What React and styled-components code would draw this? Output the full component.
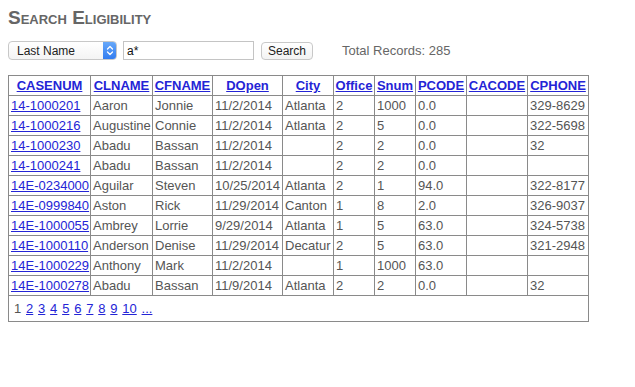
import React from "react";
import styled, { createGlobalStyle } from "styled-components";

const Global = createGlobalStyle`
  html, body { margin: 0; padding: 0; background: #fff; }
  body { font-family: "Liberation Sans", Arial, sans-serif; color: #555; }
`;

const Page = styled.div`
  padding: 7px 8px 8px 8px;
`;

const Title = styled.h1`
  margin: 0;
  font-family: "Liberation Sans", Arial, sans-serif;
  font-variant: small-caps;
  font-weight: bold;
  font-size: 19px;
  line-height: 22px;
  color: #666;
`;

const Toolbar = styled.div`
  display: flex;
  align-items: center;
  margin-top: 12px;
  height: 19px;
`;

const SelectBox = styled.div`
  position: relative;
  width: 107px;
  height: 17px;
  border: 1px solid #c8c8c8;
  border-radius: 4px;
  background: linear-gradient(#fff, #f4f4f4);
  box-sizing: content-box;
  display: flex;
  align-items: center;
  overflow: hidden;
`;

const SelectLabel = styled.span`
  flex: 1;
  padding-left: 8px;
  font-size: 12px;
  color: #222;
`;

const SelectArrow = styled.span`
  width: 14px;
  height: 19px;
  margin: -1px -1px -1px 0;
  background: linear-gradient(#6aaaf9, #2f7af0);
  border-radius: 0 4px 4px 0;
  display: flex;
  align-items: center;
  justify-content: center;
`;

const TextInput = styled.div`
  margin-left: 6px;
  width: 126px;
  height: 17px;
  border: 1px solid #c4c4c4;
  box-sizing: content-box;
  font-size: 12px;
  color: #111;
  display: flex;
  align-items: center;
  padding-left: 3px;
`;

const Button = styled.div`
  margin-left: 7px;
  width: 50px;
  height: 16px;
  border: 1px solid #c8c8c8;
  border-radius: 4px;
  background: linear-gradient(#fff, #f3f3f3);
  font-size: 12px;
  color: #222;
  display: flex;
  align-items: center;
  justify-content: center;
`;

const Total = styled.span`
  margin-left: 29px;
  font-size: 13px;
  color: #666;
`;

const Table = styled.table`
  margin-top: 15px;
  width: 580px;
  border-collapse: collapse;
  table-layout: fixed;
  border: 1px solid #8a8a8a;
  font-size: 13px;
`;

const Th = styled.th`
  border: 1px solid #8a8a8a;
  padding: 0;
  height: 19px;
  line-height: 19px;
  text-align: center;
  font-weight: bold;
  white-space: nowrap;
  overflow: visible;
`;

const Td = styled.td`
  border: 1px solid #8a8a8a;
  padding: 0 1px 0 2px;
  height: 19px;
  line-height: 19px;
  white-space: nowrap;
  overflow: visible;
  color: #555;
`;

const Link = styled.a`
  color: #2424d6;
  text-decoration: underline;
  cursor: pointer;
`;

const PagerCell = styled.td`
  border: 1px solid #8a8a8a;
  height: 25px;
  padding: 0 0 0 5px;
  font-size: 13px;
`;

const Pager = styled.div`
  display: flex;
  gap: 4.8px;
  align-items: center;
  color: #555;
`;

const cols = [82, 62, 60, 70, 51, 41, 41, 51, 61, 61];
const headers = ["CASENUM", "CLNAME", "CFNAME", "DOpen", "City", "Office", "Snum", "PCODE", "CACODE", "CPHONE"];

const rows = [
  ["14-1000201", "Aaron", "Jonnie", "11/2/2014", "Atlanta", "2", "1000", "0.0", "", "329-8629"],
  ["14-1000216", "Augustine", "Connie", "11/2/2014", "Atlanta", "2", "5", "0.0", "", "322-5698"],
  ["14-1000230", "Abadu", "Bassan", "11/2/2014", "", "2", "2", "0.0", "", "32"],
  ["14-1000241", "Abadu", "Bassan", "11/2/2014", "", "2", "2", "0.0", "", ""],
  ["14E-0234000", "Aguilar", "Steven", "10/25/2014", "Atlanta", "2", "1", "94.0", "", "322-8177"],
  ["14E-0999840", "Aston", "Rick", "11/29/2014", "Canton", "1", "8", "2.0", "", "326-9037"],
  ["14E-1000055", "Ambrey", "Lorrie", "9/29/2014", "Atlanta", "1", "5", "63.0", "", "324-5738"],
  ["14E-1000110", "Anderson", "Denise", "11/29/2014", "Decatur", "2", "5", "63.0", "", "321-2948"],
  ["14E-1000229", "Anthony", "Mark", "11/2/2014", "", "1", "1000", "63.0", "", ""],
  ["14E-1000278", "Abadu", "Bassan", "11/9/2014", "Atlanta", "2", "2", "0.0", "", "32"],
];

const Chevrons = () => (
  <svg width="8" height="11" viewBox="0 0 8 11">
    <path d="M1.5 4 L4 1.5 L6.5 4 M1.5 7 L4 9.5 L6.5 7" stroke="#fff" strokeWidth="1.3" fill="none" strokeLinecap="round" strokeLinejoin="round" />
  </svg>
);

export default function App() {
  return (
    <>
      <Global />
      <Page>
        <Title>Search Eligibility</Title>
        <Toolbar>
          <SelectBox>
            <SelectLabel>Last Name</SelectLabel>
            <SelectArrow><Chevrons /></SelectArrow>
          </SelectBox>
          <TextInput>a*</TextInput>
          <Button>Search</Button>
          <Total>Total Records: 285</Total>
        </Toolbar>
        <Table>
          <colgroup>
            {cols.map((w, i) => <col key={i} style={{ width: w }} />)}
          </colgroup>
          <thead>
            <tr>
              {headers.map((h) => (
                <Th key={h}><Link>{h}</Link></Th>
              ))}
            </tr>
          </thead>
          <tbody>
            {rows.map((r) => (
              <tr key={r[0]}>
                {r.map((c, i) => (
                  <Td key={i}>{i === 0 ? <Link>{c}</Link> : c}</Td>
                ))}
              </tr>
            ))}
            <tr>
              <PagerCell colSpan={10}>
                <Pager>
                  <span>1</span>
                  {["2", "3", "4", "5", "6", "7", "8", "9", "10", "..."].map((p) => (
                    <Link key={p}>{p}</Link>
                  ))}
                </Pager>
              </PagerCell>
            </tr>
          </tbody>
        </Table>
      </Page>
    </>
  );
}
